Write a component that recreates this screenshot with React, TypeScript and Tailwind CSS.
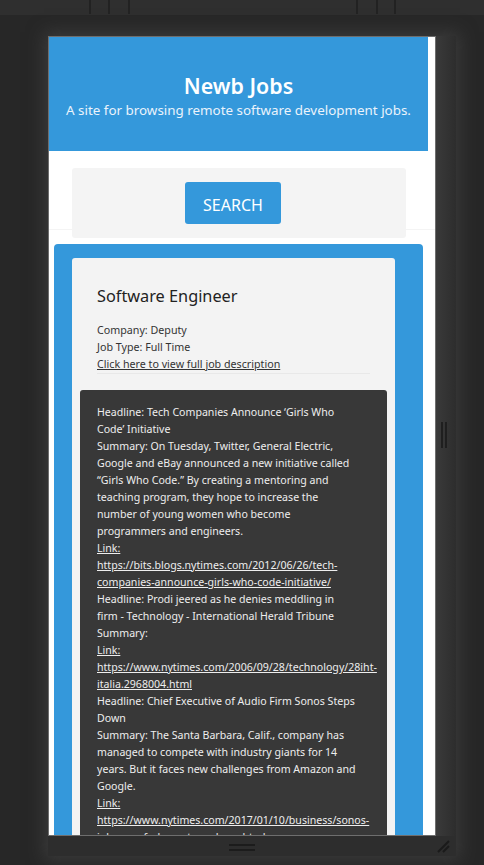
const news = [
  {
    headline: 'Tech Companies Announce ‘Girls Who Code’ Initiative',
    summary:
      'On Tuesday, Twitter, General Electric, Google and eBay announced a new initiative called “Girls Who Code.” By creating a mentoring and teaching program, they hope to increase the number of young women who become programmers and engineers.',
    link: 'https://bits.blogs.nytimes.com/2012/06/26/tech-companies-announce-girls-who-code-initiative/',
  },
  {
    headline: 'Prodi jeered as he denies meddling in firm - Technology - International Herald Tribune',
    summary: '',
    link: 'https://www.nytimes.com/2006/09/28/technology/28iht-italia.2968004.html',
  },
  {
    headline: 'Chief Executive of Audio Firm Sonos Steps Down',
    summary:
      'The Santa Barbara, Calif., company has managed to compete with industry giants for 14 years. But it faces new challenges from Amazon and Google.',
    link: 'https://www.nytimes.com/2017/01/10/business/sonos-john-macfarlane-steps-down.html',
  },
];

function NewsItem({ headline, summary, link }: { headline: string; summary: string; link: string }) {
  return (
    <div>
      <p>Headline: {headline}</p>
      <p>Summary: {summary}</p>
      <a href={link} className="block underline">
        <span className="block">Link:</span>
        <span className="block">{link}</span>
      </a>
    </div>
  );
}

export default function App() {
  return (
    <div className="w-[484px] h-[865px] overflow-hidden bg-[#272727] font-['Noto_Sans',sans-serif]">
      {/* Toolbar strip */}
      <div className="h-[15px] bg-[#2f2f2f] flex">
        <div className="ml-[89px] w-[2px] h-[14px] bg-[#222]" />
        <div className="ml-[17px] w-[2px] h-[14px] bg-[#222]" />
        <div className="ml-[18px] w-[2px] h-[14px] bg-[#222]" />
        <div className="ml-[226px] w-[2px] h-[14px] bg-[#222]" />
        <div className="ml-[18px] w-[2px] h-[14px] bg-[#222]" />
        <div className="ml-[16px] w-[2px] h-[14px] bg-[#222]" />
      </div>

      {/* Device frame */}
      <div className="ml-[48px] mt-[21px] w-[408px] grid grid-cols-[388px_20px] grid-rows-[800px_20px] shadow-[0_0_16px_4px_rgba(75,75,75,0.55)]">
        <div className="border border-[#6e6e6e] bg-white overflow-hidden">
          {/* Header */}
          <header className="w-[379px] h-[114px] bg-[#3498db] flex flex-col items-center justify-center pt-[3px]">
            <h1 className="text-[21.4px] leading-[28px] font-semibold text-white">Newb Jobs</h1>
            <p className="text-[13.4px] leading-[20px] text-[#eaf3fb]">
              A site for browsing remote software development jobs.
            </p>
          </header>

          {/* Search */}
          <section className="h-[79px] border-b border-[#f4f4f4] pt-[17px] pr-[3px]">
            <div className="ml-[23px] w-[334px] h-[70px] bg-[#f4f4f4] rounded-[3px] pt-[14px] pl-[113px]">
              <button className="w-[96px] h-[42px] bg-[#3498db] rounded-[3px] text-white text-[16px] leading-[42px] pt-[2px]">
                SEARCH
              </button>
            </div>
          </section>

          {/* Job list */}
          <div className="ml-[5px] mt-[14px] w-[369px] h-[700px] bg-[#3498db] rounded-t-[4px] pt-[14px] pl-[18px]">
            <div className="w-[323px] bg-[#f3f3f3] rounded-[3px] pt-[26px] px-[25px] pb-[20px]">
              <h2 className="text-[16.3px] leading-[24px] text-[#222]">Software Engineer</h2>
              <div className="mt-[14px] text-[10.7px] leading-[17px] text-[#333]">
                <p>Company: Deputy</p>
                <p>Job Type: Full Time</p>
                <a href="#" className="underline">
                  Click here to view full job description
                </a>
              </div>
              <hr className="border-[#e8e8e8]" />
              <div className="mt-[16px] -mx-[17px] bg-[#383838] rounded-[3px] pt-[14px] pl-[17px] pr-[31px] pb-[16px] text-[10.6px] leading-[17px] text-[#eeeeee]">
                {news.map((n) => (
                  <NewsItem key={n.link} {...n} />
                ))}
              </div>
            </div>
          </div>
        </div>

        {/* Right resize bar */}
        <div className="bg-gradient-to-r from-[#3a3a3a] to-[#2d2d2d] flex flex-col items-center">
          <div className="mt-[386px] ml-[-4px] flex gap-[2px]">
            <div className="w-[2px] h-[26px] bg-[#1f1f1f]" />
            <div className="w-[2px] h-[26px] bg-[#1f1f1f]" />
          </div>
        </div>

        {/* Bottom resize bar */}
        <div className="bg-[#2d2d2d] flex flex-col items-center pt-[8px] gap-[3px]">
          <div className="w-[26px] h-[2px] bg-[#1c1c1c]" />
          <div className="w-[26px] h-[2px] bg-[#1c1c1c]" />
        </div>

        {/* Corner handle */}
        <div className="bg-[#2d2d2d] flex items-center justify-center">
          <svg width="14" height="14" viewBox="0 0 14 14" className="ml-[-6px]">
            <path d="M2 13 L13 2 M7 13 L13 7" stroke="#1a1a1a" strokeWidth="2" />
          </svg>
        </div>
      </div>
    </div>
  );
}
